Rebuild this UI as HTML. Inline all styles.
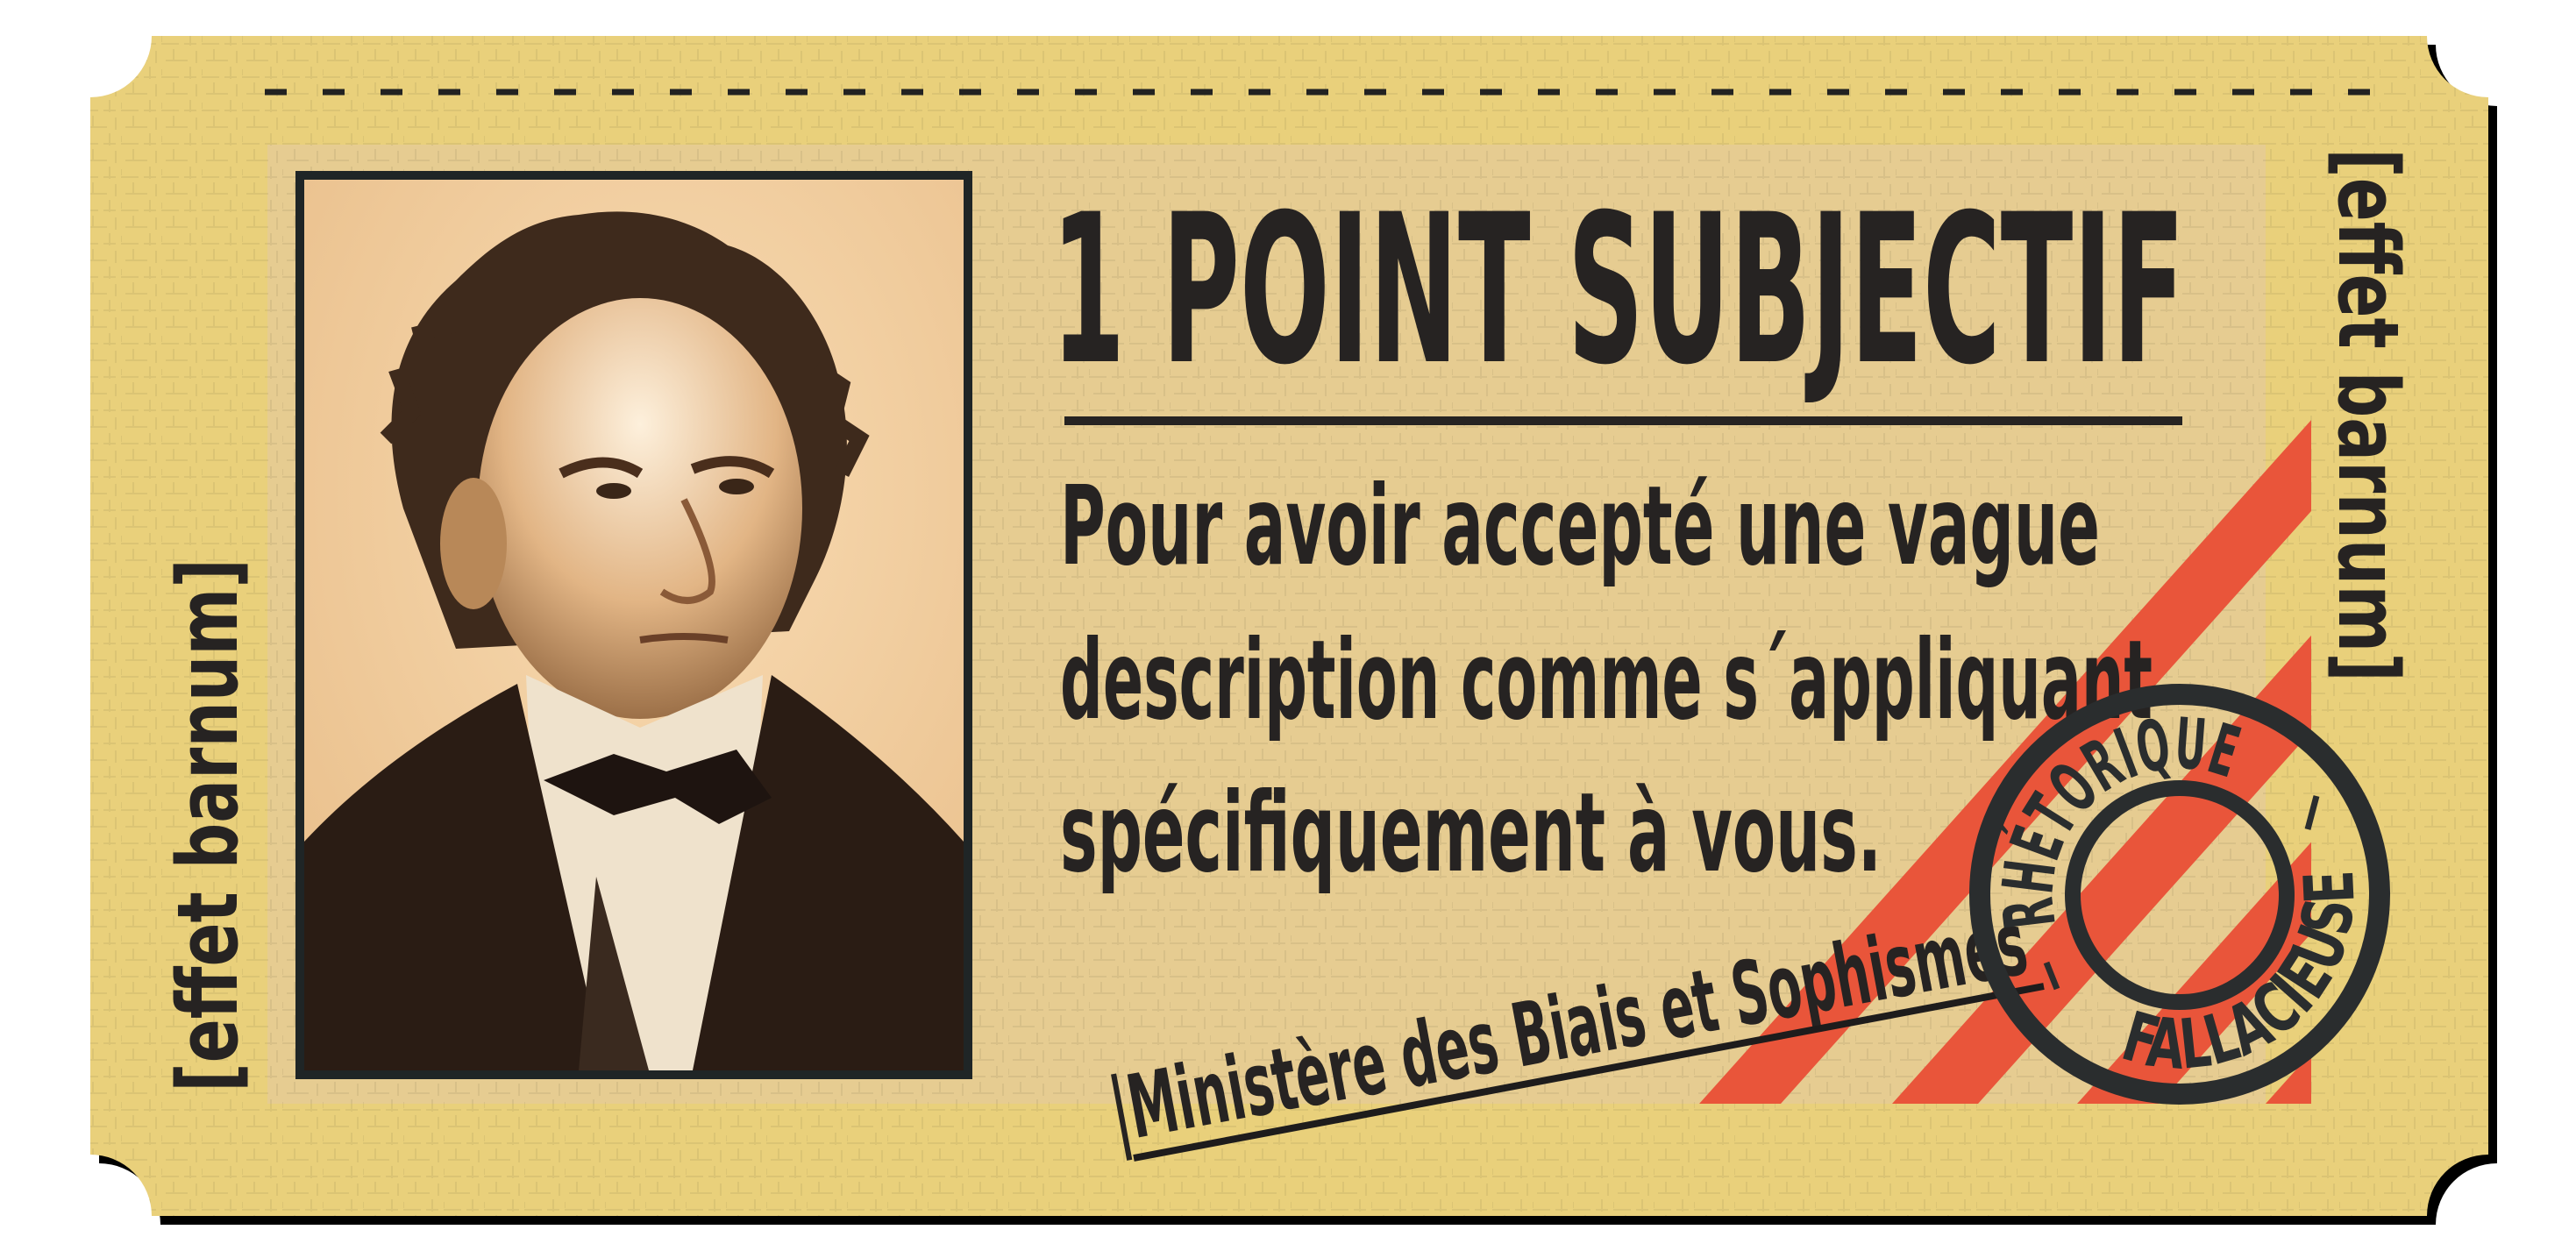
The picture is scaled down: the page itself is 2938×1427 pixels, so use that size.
<!DOCTYPE html>
<html><head><meta charset="utf-8"><style>
html,body{margin:0;padding:0;background:#fff;}
svg{display:block;}
.t{font-family:"Liberation Sans Narrow","DejaVu Sans Condensed","Liberation Sans",sans-serif;font-weight:bold;fill:#262322;}
</style></head><body>
<svg width="2938" height="1427" viewBox="0 0 2938 1427" xmlns="http://www.w3.org/2000/svg">
<defs>
<pattern id="tex" width="46" height="38" patternUnits="userSpaceOnUse">
<rect width="46" height="38" fill="none"/>
<path d="M0 12H20M26 12H40M5 31H30M0 3V10M14 18V30M33 0V14M40 20V34" stroke="#000" stroke-opacity="0.06" stroke-width="2"/>
</pattern>
<clipPath id="stripeclip"><rect x="1800" y="478" width="836" height="781"/></clipPath>
<clipPath id="photoclip"><rect x="347" y="205" width="752" height="1016"/></clipPath>
<radialGradient id="bg" cx="0.55" cy="0.35" r="0.8"><stop offset="0" stop-color="#f9dcb4"/><stop offset="1" stop-color="#e8bd88"/></radialGradient>
<radialGradient id="face" cx="0.5" cy="0.3" r="0.7"><stop offset="0" stop-color="#fdf0dc"/><stop offset="0.6" stop-color="#e2b585"/><stop offset="1" stop-color="#9c7048"/></radialGradient>
</defs>
<path transform="translate(10,10)" d="M173 41H2768A70 70 0 0 0 2838 111V1317A70 70 0 0 0 2768 1387H173A70 70 0 0 0 103 1317V111A70 70 0 0 0 173 41Z" fill="#000"/>
<path d="M173 41H2768A70 70 0 0 0 2838 111V1317A70 70 0 0 0 2768 1387H173A70 70 0 0 0 103 1317V111A70 70 0 0 0 173 41Z" fill="#e9d07b"/>
<path d="M173 41H2768A70 70 0 0 0 2838 111V1317A70 70 0 0 0 2768 1387H173A70 70 0 0 0 103 1317V111A70 70 0 0 0 173 41Z" fill="url(#tex)"/>
<line x1="302" y1="105" x2="2740" y2="105" stroke="#222" stroke-width="7" stroke-dasharray="25 41"/>
<rect x="305" y="165" width="2279" height="1094" fill="#e6cc91"/>
<rect x="305" y="165" width="2279" height="1094" fill="url(#tex)"/>
<g clip-path="url(#stripeclip)" fill="#e9553a">
<polygon points="1938,1259 2031,1259 2730,478 2637,478"/>
<polygon points="2158,1259 2256,1259 2955,478 2857,478"/>
<polygon points="2369,1259 2462,1259 3161,478 3068,478"/>
<polygon points="2584,1259 2680,1259 3379,478 3283,478"/>
</g>
<rect x="337" y="195" width="772" height="1036" fill="#1f2526"/>
<g clip-path="url(#photoclip)">
<rect x="347" y="205" width="752" height="1016" fill="url(#bg)"/>
<path d="M460 580C430 470 450 380 520 320C560 280 600 250 660 245C720 235 780 245 830 280C900 300 950 380 960 450C975 520 960 600 930 660L900 720L520 740Z" fill="#3e2a1c"/>
<path d="M440 500L470 470L455 430L490 420L480 380L520 370M930 420L960 440L950 480L980 500L960 540" stroke="#3e2a1c" stroke-width="18" fill="none"/>
<ellipse cx="730" cy="580" rx="185" ry="240" fill="url(#face)"/>
<ellipse cx="540" cy="620" rx="38" ry="75" fill="#b88858"/>
<path d="M640 540Q690 515 730 540M790 535Q840 515 880 540" stroke="#4a2e1c" stroke-width="12" fill="none"/>
<ellipse cx="700" cy="560" rx="20" ry="9" fill="#3a2618"/>
<ellipse cx="840" cy="555" rx="20" ry="9" fill="#3a2618"/>
<path d="M780 570Q820 650 810 675Q785 695 755 675" stroke="#8a5a38" stroke-width="8" fill="none"/>
<path d="M730 730Q780 722 830 730" stroke="#6a4028" stroke-width="8" fill="none"/>
<path d="M600 770L730 830L870 770L850 1221L620 1221Z" fill="#efe2cc"/>
<path d="M347 960Q440 860 590 780L690 1221L347 1221Z" fill="#2a1c14"/>
<path d="M1099 960Q1010 860 880 770L790 1221L1099 1221Z" fill="#2a1c14"/>
<path d="M620 890L700 860L760 880L840 855L880 910L820 940L770 910L700 930Z" fill="#1e1410"/>
<path d="M680 1000L740 1221L660 1221Z" fill="#3a2a1f"/>
</g>
<text class="t" x="1199" y="412" font-size="235" textLength="1293" lengthAdjust="spacingAndGlyphs">1 POINT SUBJECTIF</text>
<rect x="1214" y="475" width="1275" height="10" fill="#262322"/>
<text class="t" x="1209" y="643" font-size="125" textLength="1186" lengthAdjust="spacingAndGlyphs">Pour avoir accepté une vague</text>
<text class="t" x="1209" y="819" font-size="125" textLength="1246" lengthAdjust="spacingAndGlyphs">description comme s´appliquant</text>
<text class="t" x="1209" y="993" font-size="125" textLength="937" lengthAdjust="spacingAndGlyphs">spécifiquement à vous.</text>
<g transform="rotate(-10.5 1274 1302)">
<text class="t" x="1274" y="1302" font-size="100" textLength="1060" lengthAdjust="spacingAndGlyphs">|Ministère des Biais et Sophismes</text>
</g>
<line x1="1293" y1="1321" x2="2331" y2="1125" stroke="#1e1c1c" stroke-width="8"/>
<circle cx="2486" cy="1020" r="228" fill="none" stroke="#2a2d2e" stroke-width="24"/>
<circle cx="2486" cy="1021" r="122" fill="none" stroke="#2a2d2e" stroke-width="18"/>
<path id="arcTop" d="M2345 1055A145 145 0 1 1 2631 1020" fill="none"/>
<path id="arcBot" d="M2288 1020A198 198 0 0 0 2684 1020A198 198 0 0 0 2288 1020" fill="none"/>
<text class="t" font-size="80" style="fill:#2a2d2e"><textPath href="#arcTop" startOffset="0" textLength="320" lengthAdjust="spacingAndGlyphs">RHÉTORIQUE</textPath></text>
<text class="t" font-size="78" style="fill:#2a2d2e"><textPath href="#arcBot" startOffset="240" textLength="410" lengthAdjust="spacingAndGlyphs">FALLACIEUSE</textPath></text>
<line x1="2642" y1="908" x2="2632" y2="946" stroke="#2a2d2e" stroke-width="7"/>
<line x1="2334" y1="1098" x2="2346" y2="1128" stroke="#2a2d2e" stroke-width="7"/>
<text class="t" font-size="95" transform="translate(270 1246) rotate(-90)" textLength="609" lengthAdjust="spacingAndGlyphs" x="0" y="0">[effet barnum]</text>
<text class="t" font-size="95" transform="translate(2668 169) rotate(90)" textLength="609" lengthAdjust="spacingAndGlyphs" x="0" y="0">[effet barnum]</text>
</svg>
</body></html>
